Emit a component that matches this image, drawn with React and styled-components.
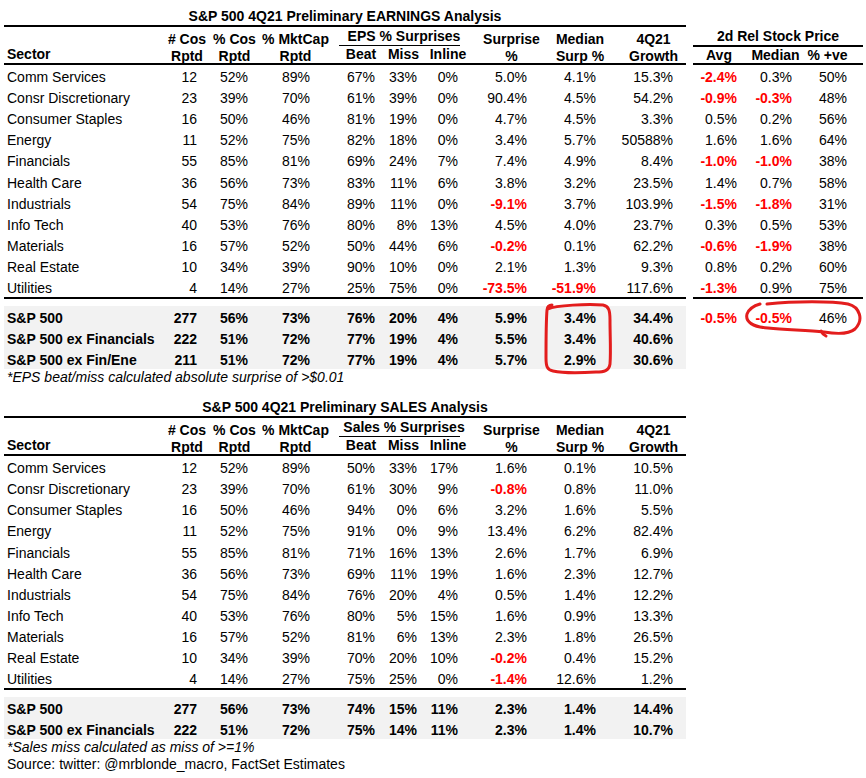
import React from 'react';
import styled, { createGlobalStyle } from 'styled-components';

const GlobalStyle = createGlobalStyle`
  html, body { margin: 0; padding: 0; background: #ffffff; }
  body {
    font-family: "Liberation Sans", Arial, sans-serif;
    font-size: 14px;
    color: #000000;
  }
`;

const LEFT = [
  { w: 159 }, { w: 48, pr: 14 }, { w: 47, pr: 10 }, { w: 75, pr: 23 },
  { w: 56, pr: 14 }, { w: 29, pr: 1 }, { w: 60, pr: 20 },
  { w: 67, pr: 18 }, { w: 70, pr: 19 }, { w: 71, pr: 13 },
];
const RIGHT = [{ w: 52, pr: 8 }, { w: 61, pr: 14 }, { w: 57, pr: 16 }];
const toCols = (list) => list.map((c) => `${c.w}px`).join(' ');
const LEFT_COLS = toCols(LEFT);
const RIGHT_COLS = toCols(RIGHT);
const SURPRISE_COLS = toCols(LEFT.slice(4, 7));
const BODY_ROW = 21.1;

const Page = styled.div`
  position: relative;
  width: 866px;
  height: 778px;
  padding-left: 4px;
  box-sizing: border-box;
  overflow: hidden;
`;

const Section = styled.section`
  display: grid;
  grid-template-columns: 682px 170px;
  column-gap: 7px;
  align-items: start;
  & + & { margin-top: 5px; }
`;

const Title = styled.h2`
  grid-column: 1;
  grid-row: 1;
  margin: 0;
  padding-top: 8px;
  line-height: 17px;
  font-size: 14px;
  font-weight: 700;
  text-align: center;
  white-space: nowrap;
  border-bottom: 2px solid #000;
`;

const Table = styled.div`
  grid-row: 2;
  grid-column: ${(p) => p.$col};
  display: flex;
  flex-direction: column;
`;

const HeadRow = styled.div`
  display: grid;
  grid-template-columns: ${(p) => p.$cols};
  height: 36px;
  border-bottom: 2px solid #000;
  font-weight: 700;
  line-height: 17px;
  white-space: nowrap;
`;

const SectorHead = styled.div`
  padding: 19px 0 0 3px;
`;

const HeadCell = styled.div`
  display: flex;
  flex-direction: column;
  align-items: center;
  padding-top: 4px;
  padding-left: ${(p) => p.$pl || 0}px;
  padding-right: ${(p) => p.$pr || 0}px;
  min-width: 0;
`;

const Group = styled.div`
  grid-column: span ${(p) => p.$span};
  display: grid;
  grid-template-columns: ${(p) => p.$cols};
  align-content: start;
`;

const GroupTitle = styled.div`
  grid-column: 1 / -1;
  padding-top: 1px;
  padding-right: ${(p) => p.$pr || 0}px;
  text-align: center;
`;

const GroupRule = styled.div`
  grid-column: 1 / -1;
  height: ${(p) => p.$h}px;
  margin: 0 ${(p) => p.$mr || 0}px 0 ${(p) => p.$ml || 0}px;
  background: #000;
`;

const SubLabel = styled.div`
  display: flex;
  justify-content: center;
  padding-right: ${(p) => p.$pr || 0}px;
  min-width: 0;
`;

const Body = styled.div`
  border-bottom: 2px solid #000;
`;

const Row = styled.div`
  display: grid;
  grid-template-columns: ${(p) => p.$cols};
  height: ${(p) => p.$h}px;
  align-items: end;
  line-height: 18px;
  white-space: nowrap;
  font-weight: ${(p) => (p.$bold ? 700 : 400)};
`;

const Label = styled.div`
  padding-left: 3px;
`;

const Num = styled.div`
  text-align: right;
  padding-right: ${(p) => p.$pr}px;
  color: ${(p) => (p.$neg ? '#ff0000' : '#000000')};
  font-weight: ${(p) => (p.$neg ? 700 : 'inherit')};
`;

const Totals = styled.div`
  margin-top: 7px;
  background: ${(p) => (p.$shade ? '#f2f2f2' : 'transparent')};
`;

const Note = styled.p`
  margin: 0;
  padding-left: 3px;
  line-height: 17px;
  white-space: nowrap;
  font-style: ${(p) => (p.$italic ? 'italic' : 'normal')};
`;

const Marks = styled.svg`
  position: absolute;
  left: 0;
  top: 0;
  width: 866px;
  height: 778px;
  pointer-events: none;
`;

const EARN = [
  ['Comm Services', '12', '52%', '89%', '67%', '33%', '0%', '5.0%', '4.1%', '15.3%'],
  ['Consr Discretionary', '23', '39%', '70%', '61%', '39%', '0%', '90.4%', '4.5%', '54.2%'],
  ['Consumer Staples', '16', '50%', '46%', '81%', '19%', '0%', '4.7%', '4.5%', '3.3%'],
  ['Energy', '11', '52%', '75%', '82%', '18%', '0%', '3.4%', '5.7%', '50588%'],
  ['Financials', '55', '85%', '81%', '69%', '24%', '7%', '7.4%', '4.9%', '8.4%'],
  ['Health Care', '36', '56%', '73%', '83%', '11%', '6%', '3.8%', '3.2%', '23.5%'],
  ['Industrials', '54', '75%', '84%', '89%', '11%', '0%', '-9.1%', '3.7%', '103.9%'],
  ['Info Tech', '40', '53%', '76%', '80%', '8%', '13%', '4.5%', '4.0%', '23.7%'],
  ['Materials', '16', '57%', '52%', '50%', '44%', '6%', '-0.2%', '0.1%', '62.2%'],
  ['Real Estate', '10', '34%', '39%', '90%', '10%', '0%', '2.1%', '1.3%', '9.3%'],
  ['Utilities', '4', '14%', '27%', '25%', '75%', '0%', '-73.5%', '-51.9%', '117.6%'],
];
const EARN_TOT = [
  ['S&P 500', '277', '56%', '73%', '76%', '20%', '4%', '5.9%', '3.4%', '34.4%'],
  ['S&P 500 ex Financials', '222', '51%', '72%', '77%', '19%', '4%', '5.5%', '3.4%', '40.6%'],
  ['S&P 500 ex Fin/Ene', '211', '51%', '72%', '77%', '19%', '4%', '5.7%', '2.9%', '30.6%'],
];
const PRICE = [
  ['-2.4%', '0.3%', '50%'],
  ['-0.9%', '-0.3%', '48%'],
  ['0.5%', '0.2%', '56%'],
  ['1.6%', '1.6%', '64%'],
  ['-1.0%', '-1.0%', '38%'],
  ['1.4%', '0.7%', '58%'],
  ['-1.5%', '-1.8%', '31%'],
  ['0.3%', '0.5%', '53%'],
  ['-0.6%', '-1.9%', '38%'],
  ['0.8%', '0.2%', '60%'],
  ['-1.3%', '0.9%', '75%'],
];
const PRICE_TOT = ['-0.5%', '-0.5%', '46%'];

const SALES = [
  ['Comm Services', '12', '52%', '89%', '50%', '33%', '17%', '1.6%', '0.1%', '10.5%'],
  ['Consr Discretionary', '23', '39%', '70%', '61%', '30%', '9%', '-0.8%', '0.8%', '11.0%'],
  ['Consumer Staples', '16', '50%', '46%', '94%', '0%', '6%', '3.2%', '1.6%', '5.5%'],
  ['Energy', '11', '52%', '75%', '91%', '0%', '9%', '13.4%', '6.2%', '82.4%'],
  ['Financials', '55', '85%', '81%', '71%', '16%', '13%', '2.6%', '1.7%', '6.9%'],
  ['Health Care', '36', '56%', '73%', '69%', '11%', '19%', '1.6%', '2.3%', '12.7%'],
  ['Industrials', '54', '75%', '84%', '76%', '20%', '4%', '0.5%', '1.4%', '12.2%'],
  ['Info Tech', '40', '53%', '76%', '80%', '5%', '15%', '1.6%', '0.9%', '13.3%'],
  ['Materials', '16', '57%', '52%', '81%', '6%', '13%', '2.3%', '1.8%', '26.5%'],
  ['Real Estate', '10', '34%', '39%', '70%', '20%', '10%', '-0.2%', '0.4%', '15.2%'],
  ['Utilities', '4', '14%', '27%', '75%', '25%', '0%', '-1.4%', '12.6%', '1.2%'],
];
const SALES_TOT = [
  ['S&P 500', '277', '56%', '73%', '74%', '15%', '11%', '2.3%', '1.4%', '14.4%'],
  ['S&P 500 ex Financials', '222', '51%', '72%', '75%', '14%', '11%', '2.3%', '1.4%', '10.7%'],
];

function LeftHeader({ group }) {
  return (
    <HeadRow $cols={LEFT_COLS}>
      <SectorHead>Sector</SectorHead>
      <HeadCell><span># Cos</span><span>Rptd</span></HeadCell>
      <HeadCell><span>% Cos</span><span>Rptd</span></HeadCell>
      <HeadCell><span>% MktCap</span><span>Rptd</span></HeadCell>
      <Group $span={3} $cols={SURPRISE_COLS}>
        <GroupTitle $pr={3}>{group}</GroupTitle>
        <GroupRule $h={1} $ml={6} $mr={18} />
        <SubLabel>Beat</SubLabel>
        <SubLabel>Miss</SubLabel>
        <SubLabel>Inline</SubLabel>
      </Group>
      <HeadCell><span>Surprise</span><span>%</span></HeadCell>
      <HeadCell><span>Median</span><span>Surp %</span></HeadCell>
      <HeadCell $pl={6}><span>4Q21</span><span>Growth</span></HeadCell>
    </HeadRow>
  );
}

function DataRow({ cells, bold, h }) {
  return (
    <Row $cols={LEFT_COLS} $h={h} $bold={bold}>
      <Label>{cells[0]}</Label>
      {cells.slice(1).map((v, i) => (
        <Num key={i} $pr={LEFT[i + 1].pr} $neg={v.startsWith('-')}>{v}</Num>
      ))}
    </Row>
  );
}

function PriceRow({ cells, h }) {
  return (
    <Row $cols={RIGHT_COLS} $h={h}>
      {cells.map((v, i) => (
        <Num key={i} $pr={RIGHT[i].pr} $neg={v.startsWith('-')}>{v}</Num>
      ))}
    </Row>
  );
}

function LeftTable({ group, rows, totals, notes }) {
  return (
    <Table $col={1}>
      <LeftHeader group={group} />
      <Body>
        {rows.map((r) => <DataRow key={r[0]} cells={r} h={BODY_ROW} />)}
      </Body>
      <Totals $shade>
        {totals.map((r) => <DataRow key={r[0]} cells={r} h={21} bold />)}
      </Totals>
      {notes}
    </Table>
  );
}

export default function App() {
  return (
    <Page>
      <GlobalStyle />
      <Section>
        <Title>S&amp;P 500 4Q21 Preliminary EARNINGS Analysis</Title>
        <LeftTable
          group="EPS % Surprises"
          rows={EARN}
          totals={EARN_TOT}
          notes={<Note $italic>*EPS beat/miss calculated absolute surprise of &gt;$0.01</Note>}
        />
        <Table $col={2}>
          <HeadRow $cols={RIGHT_COLS}>
            <Group $span={3} $cols={RIGHT_COLS}>
              <GroupTitle>2d Rel Stock Price</GroupTitle>
              <GroupRule $h={2} />
              <SubLabel>Avg</SubLabel>
              <SubLabel>Median</SubLabel>
              <SubLabel $pr={14}>% +ve</SubLabel>
            </Group>
          </HeadRow>
          <Body>
            {PRICE.map((r, i) => <PriceRow key={i} cells={r} h={BODY_ROW} />)}
          </Body>
          <Totals>
            <PriceRow cells={PRICE_TOT} h={21} />
          </Totals>
        </Table>
      </Section>
      <Section>
        <Title>S&amp;P 500 4Q21 Preliminary SALES Analysis</Title>
        <LeftTable
          group="Sales % Surprises"
          rows={SALES}
          totals={SALES_TOT}
          notes={
            <>
              <Note $italic>*Sales miss calculated as miss of &gt;=1%</Note>
              <Note>Source: twitter: @mrblonde_macro, FactSet Estimates</Note>
            </>
          }
        />
      </Section>
      <Marks viewBox="0 0 866 778">
        <g fill="none" stroke="#e31d1d" strokeWidth="3" strokeLinecap="round" strokeLinejoin="round">
          <path d="M548 309 C 556 305, 588 304, 603 305 C 609 306, 610 311, 610 320 C 610 336, 611 352, 610 364 C 609 371, 604 372, 596 372 C 580 373, 562 373, 553 371 C 547 370, 546 366, 546 358 C 546 340, 546 322, 547 310 C 547 307, 549 305, 552 305" />
          <path d="M767 304 C 795 301, 832 301, 848 304 C 860 307, 864 320, 855 329 C 848 335, 836 334, 824 332 C 808 330, 788 330, 768 328 C 753 327, 745 322, 747 314 C 749 309, 753 306, 760 304" />
          <path d="M821 331 C 822 333, 824 335, 826 336" />
        </g>
      </Marks>
    </Page>
  );
}
